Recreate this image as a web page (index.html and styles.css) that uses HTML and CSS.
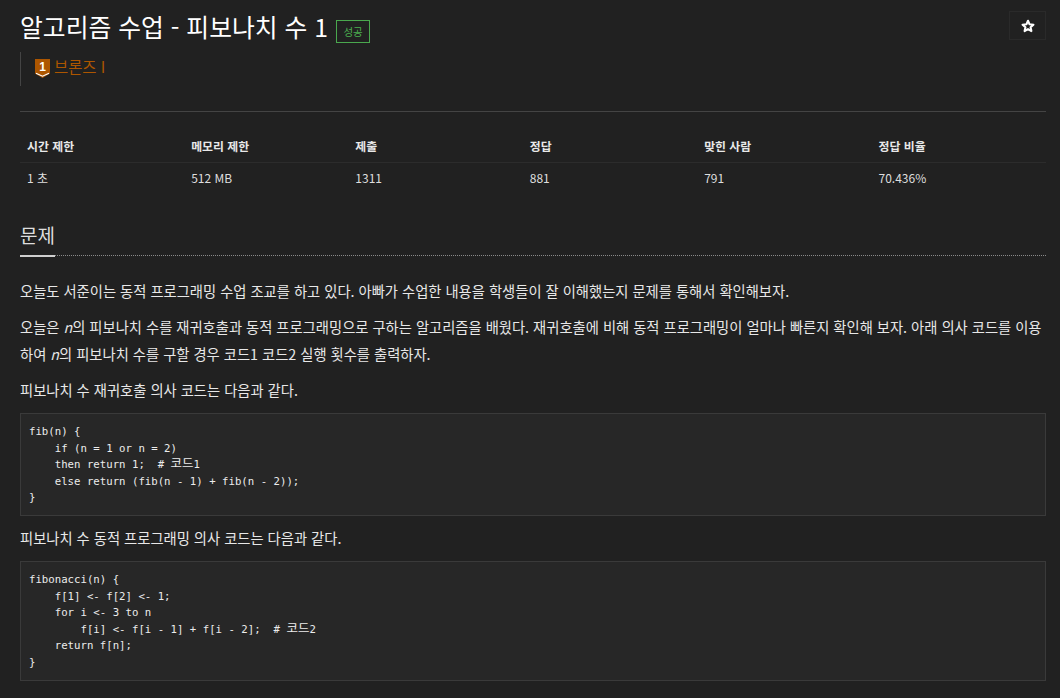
FILE: index.html
```html
<!DOCTYPE html>
<html lang="ko">
<head>
    <meta charset="UTF-8">
    <title>알고리즘 수업 - 피보나치 수 1</title>
    <link rel="stylesheet" href="styles.css">
</head>
<body>
    <!-- Title -->
    <div class="page-header">
        <div class="title-row">
            <h1>알고리즘 수업 - 피보나치 수 1</h1>
            <span class="label-success">성공</span>
        </div>
        <div class="star-button">
            <svg width="14" height="14" viewBox="0 0 24 24"><path d="M12 3l2.700 6.100 6.600.7-4.900 4.400 1.400 6.500-5.800-3.300-5.800 3.300 1.400-6.500-4.900-4.400 6.600-.7z" fill="none" stroke="#fff" stroke-width="3.600" stroke-linejoin="round"/></svg>
        </div>
    </div>

    <!-- Tier -->
    <div class="tier-quote">
        <svg class="tier-icon" width="15" height="19" viewBox="0 0 15 19"><path d="M0 0H15V14.500L7.500 19L0 14.500Z" fill="#ad5600"/><path d="M1 14.200L7.500 17.200L14 14.200" fill="none" stroke="#fff" stroke-width="1.200"/><text x="7.500" y="12" text-anchor="middle" class="tier-num">1</text></svg>
        <span class="tier-name">브론즈 I</span>
    </div>

    <hr class="divider">

    <!-- Info table -->
    <table class="info-table">
        <thead>
            <tr>
                <th class="col-small">시간 제한</th>
                <th class="col-small">메모리 제한</th>
                <th>제출</th>
                <th>정답</th>
                <th>맞힌 사람</th>
                <th>정답 비율</th>
            </tr>
        </thead>
        <tbody>
            <tr>
                <td>1 초</td>
                <td>512 MB</td>
                <td>1311</td>
                <td>881</td>
                <td>791</td>
                <td>70.436%</td>
            </tr>
        </tbody>
    </table>

    <!-- Problem -->
    <section class="problem">
        <div class="headline"><h2>문제</h2></div>
        <p>오늘도 서준이는 동적 프로그래밍 수업 조교를 하고 있다. 아빠가 수업한 내용을 학생들이 잘 이해했는지 문제를 통해서 확인해보자.</p>
        <p>오늘은 <i>n</i>의 피보나치 수를 재귀호출과 동적 프로그래밍으로 구하는 알고리즘을 배웠다. 재귀호출에 비해 동적 프로그래밍이 얼마나 빠른지 확인해 보자. 아래 의사 코드를 이용하여 <i>n</i>의 피보나치 수를 구할 경우 코드1 코드2 실행 횟수를 출력하자.</p>
        <p>피보나치 수 재귀호출 의사 코드는 다음과 같다.</p>
<pre>fib(n) {
    if (n = 1 or n = 2)
    then return 1;  # <span class="kr">코드</span>1
    else return (fib(n - 1) + fib(n - 2));
}</pre>
        <p>피보나치 수 동적 프로그래밍 의사 코드는 다음과 같다.</p>
<pre>fibonacci(n) {
    f[1] &lt;- f[2] &lt;- 1;
    for i &lt;- 3 to n
        f[i] &lt;- f[i - 1] + f[i - 2];  # <span class="kr">코드</span>2
    return f[n];
}</pre>
    </section>
</body>
</html>
```

FILE: styles.css
```css
* {
    box-sizing: border-box;
}

body {
    margin: 0;
    padding: 0 14px 0 20px;
    height: 698px;
    overflow: hidden;
    background-color: #212121;
    color: #dedede;
    font-family: "Noto Sans CJK KR", "Noto Sans", sans-serif;
    font-size: 14px;
    line-height: 20px;
}

/* Title */
.page-header {
    display: flex;
    justify-content: space-between;
    padding-top: 11px;
}

.title-row {
    display: flex;
    align-items: center;
    gap: 8px;
    height: 30px;
}

h1 {
    margin: 0;
    font-size: 24.800px;
    font-weight: 400;
    line-height: 30px;
    color: #fff;
}

.label-success {
    width: 34px;
    height: 23px;
    margin-top: 11px;
    border: 1px solid #4aa84e;
    color: #4caf50;
    font-size: 10.500px;
    line-height: 21px;
    text-align: center;
}

.star-button {
    display: flex;
    align-items: center;
    justify-content: center;
    width: 37px;
    height: 29px;
    border: 1px solid #2a2a2a;
}

/* Tier */
.tier-quote {
    display: flex;
    align-items: center;
    gap: 4px;
    height: 34px;
    margin-top: 11px;
    padding-left: 14px;
    border-left: 1px solid #444;
}

.tier-icon {
    margin-top: -1px;
}

.tier-num {
    font-family: "Liberation Sans", sans-serif;
    font-size: 12px;
    font-weight: 700;
    fill: #fff;
}

.tier-name {
    margin-top: -6px;
    font-size: 15.400px;
    color: #ad5600;
}

.divider {
    height: 1px;
    margin: 25px 0 20px;
    border: 0;
    background-color: #444;
}

/* Info table */
.info-table {
    width: 100%;
    border-collapse: collapse;
    table-layout: fixed;
}

.info-table th {
    width: 17%;
    padding: 4px 7px 6px;
    border-bottom: 1px solid #2c2c2c;
    font-size: 11.900px;
    font-weight: 700;
    text-align: left;
    color: #e8e8e8;
}

.info-table th.col-small {
    width: 16%;
}

.info-table td {
    padding: 5px 7px 6px;
    font-size: 12px;
    color: #dedede;
}

/* Problem */
.problem {
    margin-top: 28px;
}

.headline {
    border-bottom: 1px dotted #8a8a8a;
    margin-bottom: 21px;
}

.headline h2 {
    display: inline-block;
    margin: 0 0 -2px;
    padding-bottom: 7px;
    border-bottom: 2px solid #cfcfcf;
    font-size: 19px;
    font-weight: 400;
    line-height: 26px;
    color: #dedede;
}

.problem p {
    margin: 0 0 9px;
    font-size: 14.300px;
    line-height: 27px;
    color: #e8e8e8;
}

pre {
    margin: 10px 0 8px;
    padding: 10px 8px 8.500px;
    background-color: #272727;
    border: 1px solid #3a3a3a;
    color: #ececec;
    font-family: "DejaVu Sans Mono", "Noto Sans CJK KR", monospace;
    font-size: 10.700px;
    line-height: 16.500px;
}

pre .kr {
    font-family: "Noto Sans CJK KR", sans-serif;
    font-size: 12.500px;
    line-height: 1;
}
```
